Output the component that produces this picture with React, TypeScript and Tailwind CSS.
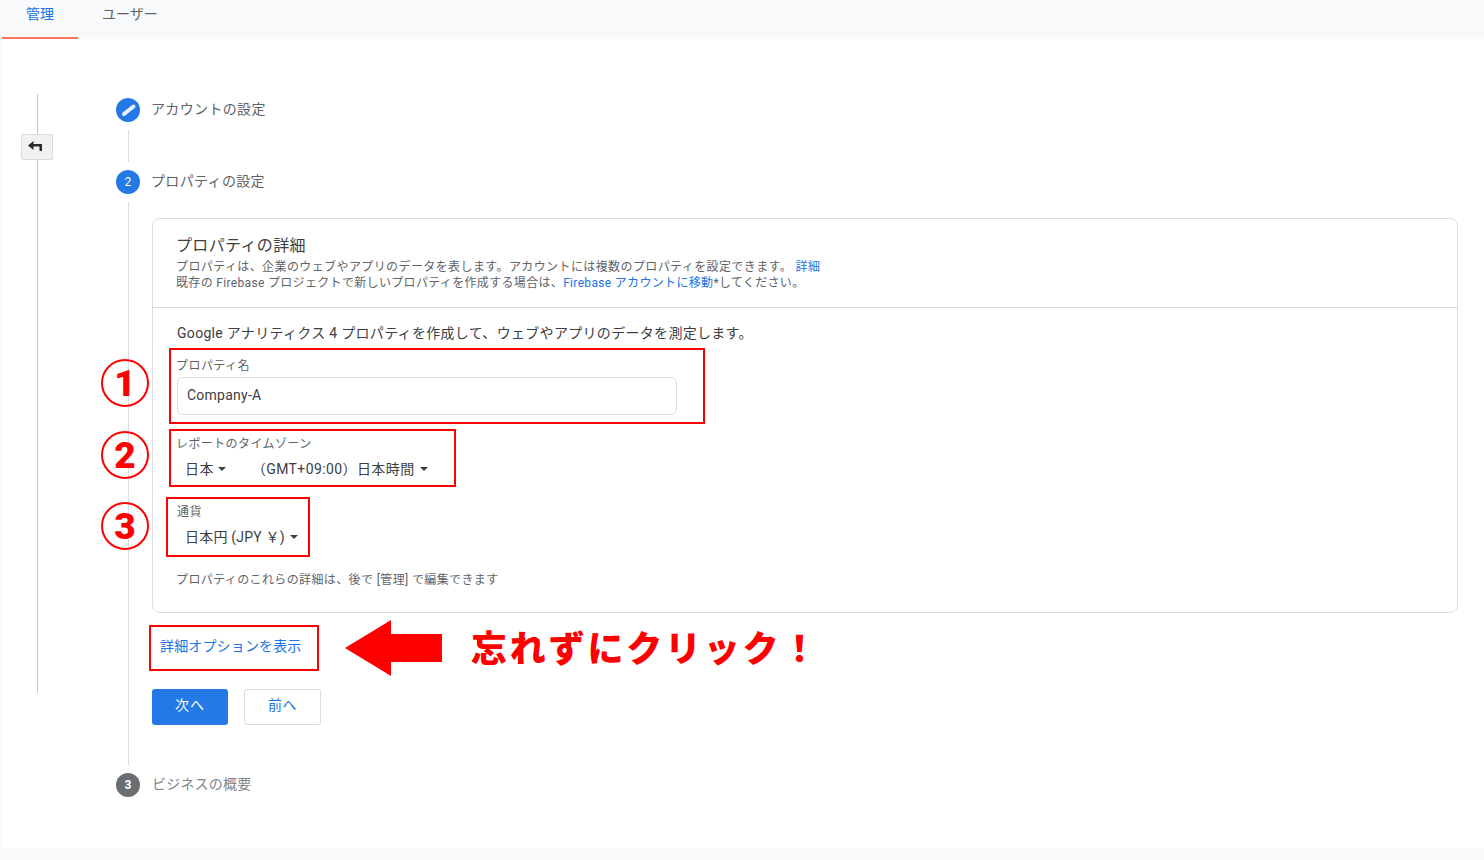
import type { ReactNode } from 'react';

const Caret = () => <span className="inline-block h-0 w-0 border-x-4 border-t-4 border-x-transparent border-t-[#3c4043]" />;

const StepCircle = ({ children, muted }: { children: ReactNode; muted?: boolean }) => (
  <div className={`flex h-6 w-6 shrink-0 items-center justify-center rounded-full text-xs text-white ${muted ? 'bg-[#6a6d71] font-bold' : 'bg-[#2579e6]'}`}>
    {children}
  </div>
);

const Connector = () => <div className="mx-auto w-px bg-[#dadce0]" />;

const RedBox = ({ className }: { className: string }) => <div className={`pointer-events-none absolute border-2 border-[#ff0000] ${className}`} />;

const Numbered = ({ n, className }: { n: string; className: string }) => (
  <div className={`absolute flex h-12 w-12 items-center justify-center rounded-full border-2 border-[#ff0000] text-[37px] leading-none font-black text-[#ff0000] ${className}`}>
    {n}
  </div>
);

export default function App() {
  return (
    <div className="relative h-[860px] w-full overflow-hidden bg-[#f8f9fa] font-['Roboto','Noto_Sans_CJK_JP',sans-serif]">
      {/* Tabs */}
      <div className="ml-[2px] flex h-[39px] text-sm">
        <div className="flex h-[39px] w-[76px] justify-center border-b-2 border-[#ff7061] pt-1 text-[#1a73e8]">管理</div>
        <div className="ml-6 pt-1 text-[#5f6368]">ユーザー</div>
      </div>

      {/* Main panel */}
      <div className="ml-[2px] flex h-[809px] bg-white">
        {/* Collapse rail */}
        <div className="relative ml-[35px] mt-[55px] h-[599px] w-px shrink-0 bg-[#c9c5c7]">
          <button className="absolute left-[-16px] top-[40px] flex h-[26px] w-8 items-center justify-center rounded-[2px] border border-[#dcdcdc] bg-[#f1f1f1] pr-1 pb-0.5">
            <svg width="14" height="10" viewBox="0 0 14 10" fill="#2b2b2b">
              <path d="M0 4.5 5.5 0V3H14V10H11.5V5.5H5.5V9Z" />
            </svg>
          </button>
        </div>

        {/* Stepper */}
        <div className="ml-[78px] flex min-w-0 flex-1 flex-col pr-[26px] pt-[59px]">
          <div className="flex items-center gap-3 text-sm tracking-[0.35px] text-[#5f6368]">
            <StepCircle>
              <svg className="ml-0.5" width="16" height="14" viewBox="0 0 16 14">
                <path d="M3 11 12.5 3.5" stroke="#e8f0fd" strokeWidth="4" strokeLinecap="round" />
              </svg>
            </StepCircle>
            <span className="-ml-px pb-0.5">アカウントの設定</span>
          </div>
          <div className="my-2 flex h-8 w-6"><Connector /></div>
          <div className="flex items-center gap-3 text-sm tracking-[0.35px] text-[#5f6368]">
            <StepCircle>2</StepCircle>
            <span className="-ml-px pb-0.5">プロパティの設定</span>
          </div>

          <div className="mt-2 flex h-[563px] gap-3">
            <div className="flex w-6 shrink-0"><Connector /></div>
            <div className="min-w-0 flex-1 pt-4">
              {/* Card */}
              <div className="h-[395px] rounded-lg border border-[#dadce0]">
                <div className="h-[89px] border-b border-[#dadce0] px-6 pt-[15px]">
                  <h2 className="-ml-px text-base leading-6 font-normal tracking-[0.35px] text-[#3c4043]">プロパティの詳細</h2>
                  <p className="-ml-px mt-px text-xs leading-4 tracking-[0.4px] text-[#5f6368]">
                    プロパティは、企業のウェブやアプリのデータを表します。アカウントには複数のプロパティを設定できます。 <span className="text-[#1a73e8]">詳細</span>
                  </p>
                  <p className="-ml-px text-xs leading-4 tracking-[0.33px] text-[#5f6368]">
                    既存の Firebase プロジェクトで新しいプロパティを作成する場合は、<span className="text-[#1a73e8]">Firebase アカウントに移動</span>*してください。
                  </p>
                </div>
                <div className="px-6 pt-[15px]">
                  <p className="text-sm leading-5 tracking-[0.31px] text-[#3c4043]">Google アナリティクス 4 プロパティを作成して、ウェブやアプリのデータを測定します。</p>
                  <label className="-ml-px mt-[15px] block text-xs leading-4 tracking-[0.45px] text-[#5f6368]">プロパティ名</label>
                  <div className="mt-[3px] flex h-[38px] w-[500px] items-center rounded-md border border-[#dadce0] px-[9px] pb-0.5 text-sm tracking-[0.25px] text-[#3c4043]">Company-A</div>
                  <label className="-ml-px mt-[21px] block text-xs leading-4 tracking-[0.4px] text-[#5f6368]">レポートのタイムゾーン</label>
                  <div className="mt-[7px] flex items-center pl-2 text-sm leading-5 tracking-[0.4px] text-[#3c4043]">
                    日本
                    <span className="ml-1 flex"><Caret /></span>
                    <span className="ml-[26px]">（GMT+09:00）日本時間</span>
                    <span className="ml-[5px] flex"><Caret /></span>
                  </div>
                  <label className="mt-[25px] block text-xs leading-4 tracking-[0.4px] text-[#5f6368]">通貨</label>
                  <div className="mt-[7px] flex items-center pl-2 text-sm leading-5 tracking-[0.2px] text-[#3c4043]">
                    日本円 (JPY ￥)
                    <span className="ml-[5px] flex"><Caret /></span>
                  </div>
                  <p className="-ml-px mt-[25px] text-xs leading-4 tracking-[0.38px] text-[#5f6368]">プロパティのこれらの詳細は、後で [管理] で編集できます</p>
                </div>
              </div>

              <div className="mt-[23px] ml-2 text-sm leading-5 tracking-[0.15px] text-[#1a73e8]">詳細オプションを表示</div>

              <div className="mt-[33px] flex gap-4">
                <button className="h-9 w-[76px] rounded-[3px] bg-[#2579e6] pb-1 text-sm tracking-[1px] text-white">次へ</button>
                <button className="h-9 w-[77px] rounded-[3px] border border-[#dadce0] bg-white pb-1 text-sm tracking-[0.5px] text-[#1a73e8]">前へ</button>
              </div>
            </div>
          </div>

          <div className="mt-2 flex items-center gap-3 text-sm tracking-[0.2px] text-[#80868b]">
            <StepCircle muted>3</StepCircle>
            <span className="pb-0.5">ビジネスの概要</span>
          </div>
        </div>
      </div>

      {/* Red annotations */}
      <RedBox className="left-[169px] top-[348px] h-[76px] w-[536px]" />
      <RedBox className="left-[169px] top-[429px] h-[58px] w-[287px]" />
      <RedBox className="left-[166px] top-[497px] h-[60px] w-[144px]" />
      <RedBox className="left-[149px] top-[625px] h-[46px] w-[170px]" />
      <Numbered n="1" className="left-[101px] top-[359px]" />
      <Numbered n="2" className="left-[101px] top-[431px]" />
      <Numbered n="3" className="left-[101px] top-[502px]" />
      <svg className="absolute left-[345px] top-[620px]" width="97" height="56" viewBox="0 0 97 56">
        <path d="M0 28 46 0V14H97V42H46V56Z" fill="#ff0000" />
      </svg>
      <div className="absolute left-[471px] top-[628px] text-[36px] leading-[44px] font-black tracking-[2.8px] whitespace-nowrap text-[#ff0000]">忘れずにクリック！</div>
    </div>
  );
}
